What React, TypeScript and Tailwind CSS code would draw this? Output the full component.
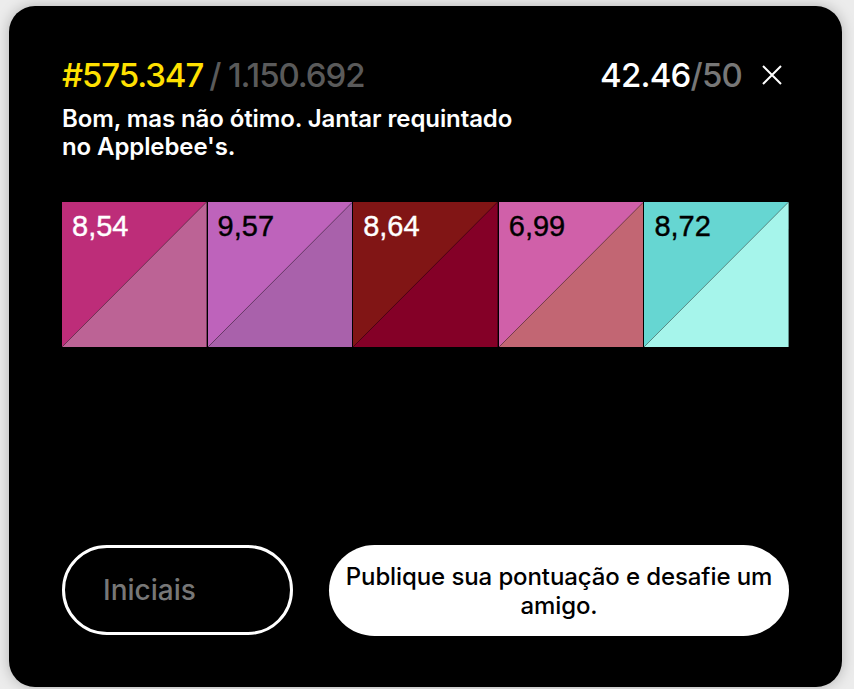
import React from "react";

type Tile = { value: string; top: string; bottom: string; text: string };

const tiles: Tile[] = [
  { value: "8,54", top: "#bd2d79", bottom: "#bc6395", text: "text-white" },
  { value: "9,57", top: "#be63bb", bottom: "#a961ab", text: "text-black" },
  { value: "8,64", top: "#811515", bottom: "#840027", text: "text-white" },
  { value: "6,99", top: "#d060a9", bottom: "#c26673", text: "text-black" },
  { value: "8,72", top: "#66d6d2", bottom: "#a6f5eb", text: "text-black" },
];

const ScoreTile: React.FC<{ tile: Tile }> = ({ tile }) => (
  <div className="relative h-[145px] flex-1 overflow-hidden border-l border-black/20 first:border-l-0">
    <svg className="absolute inset-0 h-full w-full" viewBox="0 0 100 100" preserveAspectRatio="none">
      <polygon points="0,0 100,0 0,100" fill={tile.top} />
      <polygon points="100,0 100,100 0,100" fill={tile.bottom} />
      <line x1="0" y1="100" x2="100" y2="0" stroke="rgba(0,0,0,0.25)" strokeWidth="0.6" />
    </svg>
    <span className={`relative block pl-[10px] pt-[5px] text-[29px] leading-[38px] font-['Liberation_Sans',Arial,sans-serif] [-webkit-text-stroke:0.4px_currentColor] ${tile.text}`}>
      {tile.value}
    </span>
  </div>
);

export default function App() {
  return (
    <div className="min-h-screen bg-[#ececec] pl-[9px] pt-[6px] font-['Inter',sans-serif]">
      <div className="flex h-[681px] w-[833px] flex-col rounded-[26px] bg-black px-[53px] pb-[51px] pt-[49px] shadow-[0_0_14px_rgba(0,0,0,0.25)]">
        {/* header */}
        <div className="flex items-start justify-between">
          <div>
            <p className="text-[33px] leading-[40px] font-medium tracking-[-1.1px]">
              <span className="text-[#ffe000]">#575.347</span>
              <span className="ml-[6px] text-[#5a5a5a]">/ 1.150.692</span>
            </p>
            <p className="mt-[10px] w-[470px] text-[24px] leading-[28px] font-semibold tracking-[-0.1px] text-white">
              Bom, mas não ótimo. Jantar requintado no Applebee's.
            </p>
          </div>
          <div className="flex items-center gap-[19px]">
            <p className="text-[33px] leading-[40px] font-medium tracking-[-0.8px]">
              <span className="text-white">42.46</span>
              <span className="text-[#777777]">/50</span>
            </p>
            <button className="mr-[6px] text-white" aria-label="Fechar">
              <svg width="22" height="22" viewBox="0 0 22 22" fill="none" stroke="currentColor" strokeWidth="2">
                <path d="M2 2 L20 20 M20 2 L2 20" />
              </svg>
            </button>
          </div>
        </div>

        {/* tiles */}
        <div className="mt-[41px] flex">
          {tiles.map((t) => (
            <ScoreTile key={t.value} tile={t} />
          ))}
        </div>

        <div className="flex-1" />

        {/* actions */}
        <div className="flex gap-[36px]">
          <input
            placeholder="Iniciais"
            className="h-[90px] w-[231px] rounded-full border-[3px] border-white bg-black px-[38px] text-[28px] font-medium text-white placeholder:text-[#777777] outline-none"
          />
          <button className="flex h-[91px] w-[460px] items-center justify-center rounded-full bg-white px-[14px] text-center text-[24px] leading-[29px] font-medium tracking-[-0.1px] text-black">
            Publique sua pontuação e desafie um amigo.
          </button>
        </div>
      </div>
    </div>
  );
}
